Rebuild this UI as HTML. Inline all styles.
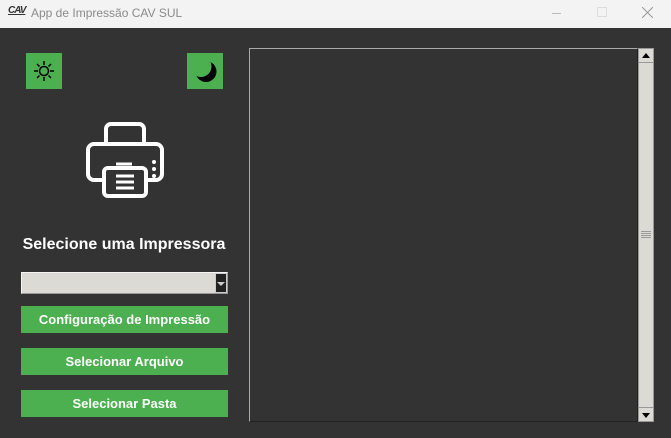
<!DOCTYPE html>
<html><head><style>
*{margin:0;padding:0;box-sizing:border-box}
body{width:671px;height:438px;background:#333;font-family:"Liberation Sans",sans-serif;position:relative;overflow:hidden}
.title{position:absolute;left:0;top:0;width:671px;height:28px;background:#f3f3f3}
.title span{position:absolute;left:31px;top:6px;font-size:12px;color:#8a8a8a}
.logo{position:absolute;left:8px;top:5px;font-size:10px;font-weight:bold;font-style:italic;color:#333;text-decoration:underline;letter-spacing:-1px}
.g{position:absolute;background:#4caf50}
.btn{position:absolute;left:21px;width:207px;height:27px;background:#4caf50;color:#fff;font-weight:bold;font-size:13px;text-align:center;line-height:27px}
</style></head><body>
<div class="title"><div class="logo">CAV</div><span>App de Impressão CAV SUL</span>
<div style="position:absolute;left:552px;top:13px;width:9px;height:1px;background:#bbb"></div>
<div style="position:absolute;left:597px;top:7px;width:10px;height:10px;border:1px solid #ddd"></div>
<svg style="position:absolute;left:642px;top:7px" width="11" height="11"><path d="M0 0L11 11M11 0L0 11" stroke="#999" stroke-width="1"/></svg>
</div>
<div class="g" style="left:26px;top:53px;width:36px;height:36px">
<svg width="36" height="36"><circle cx="18" cy="18" r="4.5" fill="none" stroke="#000" stroke-width="1.5"/><g stroke="#000" stroke-width="1.5"><path d="M18 8v4M18 24v4M8 18h4M24 18h4M11 11l2.5 2.5M22.5 22.5L25 25M25 11l-2.5 2.5M13.5 22.5L11 25"/></g></svg></div>
<div class="g" style="left:187px;top:53px;width:36px;height:36px">
<svg width="36" height="36"><circle cx="19" cy="18.5" r="10.5" fill="#000"/><circle cx="14" cy="13.5" r="10.5" fill="#4caf50"/></svg></div>
<svg style="position:absolute;left:84px;top:120px" width="82" height="80" viewBox="0 0 82 80" fill="none" stroke="#fff" stroke-width="4">
<rect x="22" y="4" width="38" height="24" rx="5"/>
<rect x="4" y="24" width="74" height="36" rx="6" fill="#333"/>
<rect x="20" y="48" width="42" height="28" rx="4" fill="#333"/>
<path d="M32 44h16M32 56h18M32 62h18M32 68h18" stroke-width="3"/>
<circle cx="70" cy="42" r="1.5" fill="#fff" stroke-width="1"/><circle cx="70" cy="49" r="1.5" fill="#fff" stroke-width="1"/><circle cx="70" cy="56" r="1.5" fill="#fff" stroke-width="1"/>
</svg>
<div style="position:absolute;left:0;width:248px;top:236px;text-align:center;color:#fff;font-weight:bold;font-size:16px">Selecione uma Impressora</div>
<div style="position:absolute;left:21px;top:272px;width:207px;height:22px;background:#dcdad5;border:1px solid #f5f5f5;border-right-color:#999;border-bottom-color:#999"></div>
<div style="position:absolute;left:215px;top:273px;width:12px;height:20px;background:#222;border:1px solid #ccc"><div style="margin:8px auto 0;width:0;height:0;border-left:4px solid transparent;border-right:4px solid transparent;border-top:4px solid #ccc"></div></div>
<div class="btn" style="top:306px">Configuração de Impressão</div>
<div class="btn" style="top:348px">Selecionar Arquivo</div>
<div class="btn" style="top:390px">Selecionar Pasta</div>
<div style="position:absolute;left:249px;top:48px;width:389px;height:374px;border:1px solid #222;border-top-color:#aaa;border-left-color:#aaa"></div>
<div style="position:absolute;left:638px;top:48px;width:16px;height:374px;background:#dcdad5;border:1px solid #999">
<div style="height:14px;border-bottom:1px solid #999;position:relative"><div style="position:absolute;left:3px;top:4px;border-left:4px solid transparent;border-right:4px solid transparent;border-bottom:5px solid #000"></div></div>
<div style="position:absolute;left:2px;top:182px;width:10px;height:7px;background:repeating-linear-gradient(#999 0 1px,transparent 1px 2px)"></div>
<div style="position:absolute;bottom:0;left:0;width:14px;height:14px;border-top:1px solid #999"><div style="position:absolute;left:3px;top:5px;border-left:4px solid transparent;border-right:4px solid transparent;border-top:5px solid #000"></div></div>
</div>
</body></html>
